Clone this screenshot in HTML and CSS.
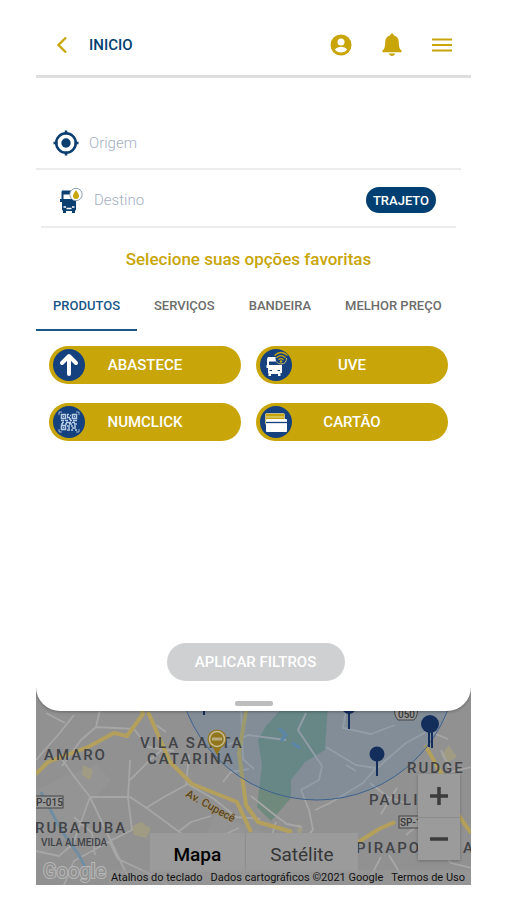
FILE: index.html
```html
<!DOCTYPE html>
<html lang="pt-BR">
<head>
<meta charset="utf-8">
<meta name="viewport" content="width=device-width, initial-scale=1">
<title>Inicio</title>
<link rel="stylesheet" href="styles.css">
</head>
<body>
<main class="screen">
  <section class="sheet">
    <header class="topbar">
      <button class="icon-button" type="button" aria-label="Voltar">
        <svg width="12" height="18" viewBox="0 0 12 18"><path d="M10 1.500 2.500 9l7.500 7.500" fill="none" stroke="currentColor" stroke-width="2.300"/></svg>
      </button>
      <h1 class="topbar-title">INICIO</h1>
      <nav class="actions">
        <button class="icon-button" type="button" aria-label="Perfil">
          <svg width="22" height="22" viewBox="0 0 22 22"><circle cx="11" cy="11" r="10.500" fill="currentColor"/><circle cx="11" cy="8" r="3.500" fill="#fff"/><path d="M4.800 15.300Q7 12.800 11 12.800t6.200 2.500Q15 18.600 11 18.600t-6.200-3.300Z" fill="#fff"/></svg>
        </button>
        <button class="icon-button" type="button" aria-label="Notificações">
          <svg width="20" height="24" viewBox="0 0 20 24"><path d="M10 .5c1 0 1.600.7 1.600 1.700 3.500.8 5.200 3.400 5.200 7 0 4.600.8 6.600 2.700 8.300v1.700H.5v-1.700c1.900-1.700 2.700-3.700 2.700-8.300 0-3.600 1.700-6.200 5.200-7C8.400 1.200 9 .5 10 .5ZM6.800 20.600h6.400c-.4 1.600-1.600 2.500-3.200 2.500s-2.800-.9-3.200-2.500Z" fill="currentColor"/></svg>
        </button>
        <button class="icon-button" type="button" aria-label="Menu">
          <svg width="20" height="16" viewBox="0 0 20 16"><path d="M0 2.500h20M0 8h20M0 13.500h20" stroke="currentColor" stroke-width="2"/></svg>
        </button>
      </nav>
    </header>

    <form class="filters">
      <div class="field field-origin">
        <svg class="field-icon" width="26" height="26" viewBox="0 0 26 26"><g fill="none" stroke="#0b3f70"><circle cx="13" cy="13" r="9.800" stroke-width="2.500"/><path d="M13 .5v4M13 21.500v4M.5 13h4M21.500 13h4" stroke-width="2.500"/></g><circle cx="13" cy="13" r="4.700" fill="#0b3f70"/></svg>
        <input class="field-input" type="text" placeholder="Origem" aria-label="Origem">
      </div>
      <div class="field field-destination">
        <svg class="field-icon" width="26" height="26" viewBox="0 0 26 26"><path d="M4 3.500h9v4H5.500V12H18v10.500q0 1-1 1V26h-3v-2H8v2H5v-2.500q-1 0-1-1V15H2v-3h1.500V5Z" fill="#0b3f70"/><path d="M5.500 20H8M14 20h2.500M8.500 21.500h5" stroke="#fff" stroke-width="1.300"/><circle cx="18" cy="7.500" r="6.200" fill="#fff" stroke="#8c9eae"/><path d="M18 3q3 4 3 6a3 3 0 0 1-6 0q0-2 3-6Z" fill="#c8a508"/></svg>
        <input class="field-input" type="text" placeholder="Destino" aria-label="Destino">
        <button class="route-button" type="button">TRAJETO</button>
      </div>

      <h2 class="heading">Selecione suas opções favoritas</h2>

      <div class="tabs" role="tablist">
        <button class="tab tab-active" type="button" role="tab" aria-selected="true">PRODUTOS</button>
        <button class="tab" type="button" role="tab" aria-selected="false">SERVIÇOS</button>
        <button class="tab" type="button" role="tab" aria-selected="false">BANDEIRA</button>
        <button class="tab" type="button" role="tab" aria-selected="false">MELHOR PREÇO</button>
      </div>

      <div class="options">
        <button class="option" type="button">
          <svg class="option-icon" width="32" height="32" viewBox="0 0 32 32"><circle cx="16" cy="16" r="16" fill="#15417e"/><path d="M16 25V8M9 14l7-7 7 7" fill="none" stroke="#fff" stroke-width="4" stroke-linecap="round" stroke-linejoin="round"/></svg>
          <span class="option-label">ABASTECE</span>
        </button>
        <button class="option" type="button">
          <svg class="option-icon" width="32" height="32" viewBox="0 0 32 32"><circle cx="16" cy="16" r="16" fill="#15417e"/><path d="M8 8h9v4.500H9V16h13v8h-1.500v3H18v-2h-7v2H8.500v-3H8v-5H6.500v-3H7v-6Z" fill="#fff"/><path d="M9.500 21.500H12M17.500 21.500H20" stroke="#15417e"/><circle cx="21" cy="9.500" r="5.500" fill="#15417e"/><path d="M26.500 9q0 6-5.500 6-3 0-4.500-2" fill="none" stroke="#c8b96a"/><path d="M14.500 6.500q6.500-6 13 0M16.500 8.700q4.500-4 9 0M18.500 10.700q2.500-2 5 0" fill="none" stroke="#c8a508" stroke-width="1.200"/><circle cx="21" cy="12.500" r="1.200" fill="#c8a508"/></svg>
          <span class="option-label">UVE</span>
        </button>
        <button class="option" type="button">
          <svg class="option-icon" width="32" height="32" viewBox="0 0 32 32"><circle cx="16" cy="16" r="16" fill="#15417e"/><g fill="none" stroke="#b8cce6"><path d="M6 9V6h3M23 6h3v3M26 23v3h-3M9 26H6v-3" stroke-width=".8"/><path d="M8.500 8.500h4v4h-4zM19.500 8.500h4v4h-4zM8.500 19.500h4v4h-4z" stroke-width="1.500"/><path d="M14 8.500h2M17 9.500h1M14 11.500h3M8 14.500h3M12 14.500h3M17 14.500h2M20 14.500h4M9 16.500h2M13 16.500h5M19 16.500h3M8 18h2M12 18h2M16 18h3M21 18h3M14 20h3M18 20h2M21 20h2M15 22h2M19 22h4M14 24h3M18 24h2M22 24h2M14 10h1M16 13h2M10 10.500h1M21 10.500h1M10 21.500h1" stroke-width="1.600"/></g></svg>
          <span class="option-label">NUMCLICK</span>
        </button>
        <button class="option" type="button">
          <svg class="option-icon" width="32" height="32" viewBox="0 0 32 32"><circle cx="16" cy="16" r="16" fill="#15417e"/><rect x="5.500" y="7.500" width="19" height="11" rx="1" fill="#c8a508" stroke="#e6dba0" stroke-width=".7"/><path d="M6 11h18" stroke="#e6dba0"/><rect x="6" y="13" width="21" height="13" rx="1" fill="#fff"/><path d="M6 16.500h21" stroke="#15417e" stroke-width="1.300"/></svg>
          <span class="option-label">CARTÃO</span>
        </button>
      </div>

      <button class="apply-button" type="submit" disabled>APLICAR FILTROS</button>
    </form>
    <div class="handle"></div>
  </section>

  <section class="map" aria-label="Mapa">
    <svg class="map-canvas" viewBox="0 0 435 200" preserveAspectRatio="xMidYMax slice">
      <rect width="435" height="200" fill="#919191"/>
      <path d="M0 105 25 93 60 80 75 95 53 120 28 155 0 175ZM180 130l50 18 30 52h-70l-30-35Z" fill="#949494"/>
      <path d="M249 20h43l-3 45-20 12-14 18v18l-20 23-14-14 5-42-4-25 8-14Z" fill="#6f8a7c"/>
      <path d="M95 142l10-5 10 7-5 9-12-3ZM47 80l10 5-3 10-8-5ZM405 70l8-10 8 12-10 6ZM262 137l5 8-6 8Z" fill="#9f9c83"/>
      <g fill="none" stroke="#a6a6a6" stroke-width="1.800" stroke-linejoin="round">
        <path d="M0 75 22 50 38 30M65 20l-5 22-15 13-19 26M60 42l38 2 14 18 26 4M94 75l-2 38 4 32-22 11-36 20-10 24M55 112h39l18 12 30 22 24 18 18 10M54 112 37 90 23 70M54 112l-17 47-14 12-23-5M54 112l38 80M94 95l22-22 10-8M110 123l18-11 22-12 3-30M150 98l28 16 22 18 24 2M142 147l13-10 20-6M163 163l-5 33M183 152l20-9M73 156l9 18 30 14 20 12M38 132l18 16 3 22M10 28l19 10M120 40l10 7M187 97l8-10 18-3M205 20l2 54 11 10M192 60l20-10 38 5M270 28l-8 17 24 36-3 14-18 10 8 20 4 20-12 12-9 24M310 25l-3 18 28 6 24-9M290 62l30 18 20 3-13 15-33 20-15 7M310 80l10 6M334 98l18 14 24 8M341 83l29-25 22-12 20 8M361 103l-16 26M215 111l25 20 11 8 15 3M240 137l-10 32M405 65l10 22 20-5M403 165l12 13 20 5M345 172l-15 28M353 170l12 20M370 150l14-12"/>
      </g>
      <g fill="none" stroke="#b3a05c" stroke-width="4" stroke-linejoin="round">
        <path d="M0 89 12 77 52 62 78 48 91 51 107 29 103 20M112 27l22 50 22 22 45 18 14 30M211 20l-8 48 7 52 12 17 34 10M389 60l16 28 16 40 14 20M321 158l22-14 16-7"/>
      </g>
      <path d="M5 107l20 38 18 25 10 20" fill="none" stroke="#718da1" stroke-width="3"/>
      <path d="M243 43l7 7-5 6M256 58l8 5" fill="none" stroke="#5f88a8" stroke-width="3"/>
      <circle cx="281" cy="-25" r="140" fill="#4f7fb0" fill-opacity=".22" stroke="#3d628e"/>
      <g class="map-district">
        <text x="8" y="75">AMARO</text>
        <text x="104" y="63">VILA SANTA</text>
        <text x="111" y="79">CATARINA</text>
        <text x="-1" y="148">RUBATUBA</text>
        <text x="371" y="88">RUDGE</text>
        <text x="333" y="120">PAULI</text>
        <text x="320" y="168">PIRAPO</text>
        <text x="427" y="168">A</text>
      </g>
      <text class="map-suburb" x="5" y="161">VILA ALMEIDA</text>
      <text class="map-road" x="149" y="111" transform="rotate(29 149 111)">Av. Cupecê</text>
      <g fill="#999" stroke="#444"><rect x="-10" y="111" width="37" height="12"/><rect x="363" y="131" width="40" height="12"/><path d="M359 20h22q2 10-3 15h-16q-5-5-3-15Z"/></g>
      <g class="map-shield"><text x="0" y="121">P-015</text><text x="364" y="141">SP-1</text><text x="362" y="33">050</text></g>
      <g stroke="#142e5c" stroke-width="2"><path d="M313 20v24M341 68v23M393 40v22M396 42v21M168 24v6"/></g>
      <g fill="#142e5c"><circle cx="313" cy="22" r="7"/><circle cx="341" cy="69" r="7.500"/><circle cx="394" cy="39" r="9"/></g>
      <path d="M176 61l5 9 5-9Z" fill="#92761d"/>
      <circle cx="181" cy="54" r="9.500" fill="#92761d"/>
      <circle cx="181" cy="54" r="7.500" fill="none" stroke="#c6bd98" stroke-width="1.500"/>
      <path d="M176 54h10" stroke="#b7aa7c" stroke-width="3"/>
      <text class="map-logo" x="7" y="193">Google</text>
    </svg>
    <div class="zoom-controls">
      <button class="zoom-button" type="button" aria-label="Aumentar zoom"><svg width="20" height="20" viewBox="0 0 20 20"><path d="M1 10h18M10 1v18" stroke="#3c3c3c" stroke-width="3.500"/></svg></button>
      <button class="zoom-button" type="button" aria-label="Diminuir zoom"><svg width="20" height="20" viewBox="0 0 20 20"><path d="M1 10h18" stroke="#3c3c3c" stroke-width="3.500"/></svg></button>
    </div>
    <div class="map-types">
      <button class="map-type map-type-active" type="button">Mapa</button>
      <button class="map-type" type="button">Satélite</button>
    </div>
    <footer class="credits">
      <a href="#atalhos">Atalhos do teclado</a>
      <span>Dados cartográficos ©2021 Google</span>
      <a href="#termos">Termos de Uso</a>
    </footer>
  </section>
</main>
</body>
</html>
```
FILE: styles.css
```css
:root {
  --gold: #c8a508;
  --navy: #003f72;
}

* {
  box-sizing: border-box;
}

body {
  margin: 0;
  background: #fff;
  font-family: Roboto, "Liberation Sans", sans-serif;
}

button,
input {
  margin: 0;
  padding: 0;
  border: 0;
  background: none;
  font: inherit;
}

svg {
  display: block;
}

.screen {
  margin: 0 36px;
}

.sheet {
  position: relative;
  z-index: 1;
  padding-bottom: 5px;
  border-radius: 0 0 24px 24px;
  background: #fff;
  box-shadow: 0 1px 3px rgba(0, 0, 0, 0.3);
  clip-path: inset(0 0 -6px 0);
}

.topbar {
  display: flex;
  align-items: center;
  height: 78px;
  padding: 14px 19px 0 20px;
  border-bottom: 3px solid #dedede;
}

.topbar-title {
  flex: 1;
  margin: 0 0 0 21px;
  color: var(--navy);
  font-size: 15px;
  font-weight: 500;
}

.icon-button {
  color: var(--gold);
}

.actions {
  display: flex;
  align-items: center;
  gap: 30px;
}

.filters {
  display: flex;
  flex-direction: column;
}

.field {
  display: flex;
  align-items: center;
  gap: 10px;
}

.field-origin {
  height: 56px;
  margin: 36px 10px 0 0;
  padding: 4px 0 0 17px;
  border-bottom: 2px solid #ececec;
}

.field-destination {
  height: 58px;
  margin: 0 15px 0 5px;
  padding: 4px 20px 0 17px;
  border-bottom: 2px solid #ececec;
}

.field-icon {
  flex: none;
}

.field-input {
  flex: 1;
  min-width: 0;
  height: 32px;
  color: #5c6e86;
  font-size: 15px;
  font-weight: 300;
}

.field-input::placeholder {
  color: #a3afc2;
}

.route-button {
  width: 70px;
  height: 26px;
  border-radius: 13px;
  background: var(--navy);
  color: #fff;
  font-size: 13px;
  font-weight: 500;
}

.heading {
  margin: 19px 0 11px;
  padding-right: 10px;
  color: var(--gold);
  font-size: 17px;
  font-weight: 500;
  line-height: 24px;
  text-align: center;
}

.tabs {
  display: flex;
}

.tab {
  height: 49px;
  padding: 0 17px;
  border-bottom: 2px solid transparent;
  color: #6c6c6c;
  font-size: 13px;
  font-weight: 500;
  white-space: nowrap;
}

.tab-active {
  border-color: #1a5688;
  color: #1a5688;
}

.options {
  display: grid;
  grid-template-columns: 1fr 1fr;
  gap: 19px 15px;
  padding: 15px 23px 0 13px;
}

.option {
  display: flex;
  align-items: center;
  height: 38px;
  padding: 0 4px;
  border-radius: 19px;
  background: var(--gold);
  color: #fff;
  font-size: 15px;
  font-weight: 500;
}

.option-icon {
  flex: none;
}

.option-label {
  flex: 1;
  padding-right: 32px;
}

.apply-button {
  align-self: center;
  width: 178px;
  height: 38px;
  margin: 202px 0 20px 4px;
  border-radius: 19px;
  background: #ced0d1;
  color: #fff;
  font-size: 15px;
  font-weight: 500;
}

.handle {
  width: 38px;
  height: 5px;
  margin: 0 auto;
  border-radius: 2px;
  background: #bdbdbd;
}

.map {
  position: relative;
  height: 200px;
  margin-top: -26px;
  overflow: hidden;
  background: #919191;
}

.map-canvas {
  width: 100%;
  height: 100%;
}

.map-district {
  fill: #414347;
  font-size: 15px;
  font-weight: 500;
  letter-spacing: 2px;
}

.map-suburb {
  fill: #414347;
  font-size: 10px;
  font-weight: 500;
}

.map-road {
  fill: #5b451d;
  stroke: #a3977b;
  stroke-width: 1px;
  paint-order: stroke;
  font-size: 11px;
  font-weight: 500;
}

.map-shield {
  fill: #383838;
  font-size: 10px;
  font-weight: 500;
}

.map-logo {
  fill: #919191;
  stroke: #b8b8b8;
  stroke-width: 2px;
  paint-order: stroke;
  font-size: 20px;
}

.zoom-controls {
  position: absolute;
  right: 11px;
  bottom: 25px;
  width: 42px;
  background: #9b9b9b;
  box-shadow: 0 1px 3px rgba(0, 0, 0, 0.25);
}

.zoom-button {
  display: grid;
  place-items: center;
  width: 100%;
  height: 43px;
}

.zoom-button + .zoom-button {
  border-top: 1px solid #8c8c8c;
}

.map-types {
  position: absolute;
  bottom: 13px;
  left: 50%;
  display: flex;
  transform: translateX(-50%);
  background: #9b9b9b;
}

.map-type {
  height: 39px;
  padding: 4px 24px 0;
  color: #363636;
  font-size: 19px;
}

.map-type-active {
  border-right: 1px solid #8c8c8c;
  color: #000;
  font-weight: 500;
}

.credits {
  position: absolute;
  right: 0;
  bottom: 0;
  display: flex;
  gap: 8px;
  padding: 0 6px 0 2px;
  background: rgba(151, 151, 151, 0.6);
  color: #111;
  font-size: 11px;
  line-height: 15px;
  white-space: nowrap;
}

.credits a {
  color: inherit;
  text-decoration: none;
}
```
